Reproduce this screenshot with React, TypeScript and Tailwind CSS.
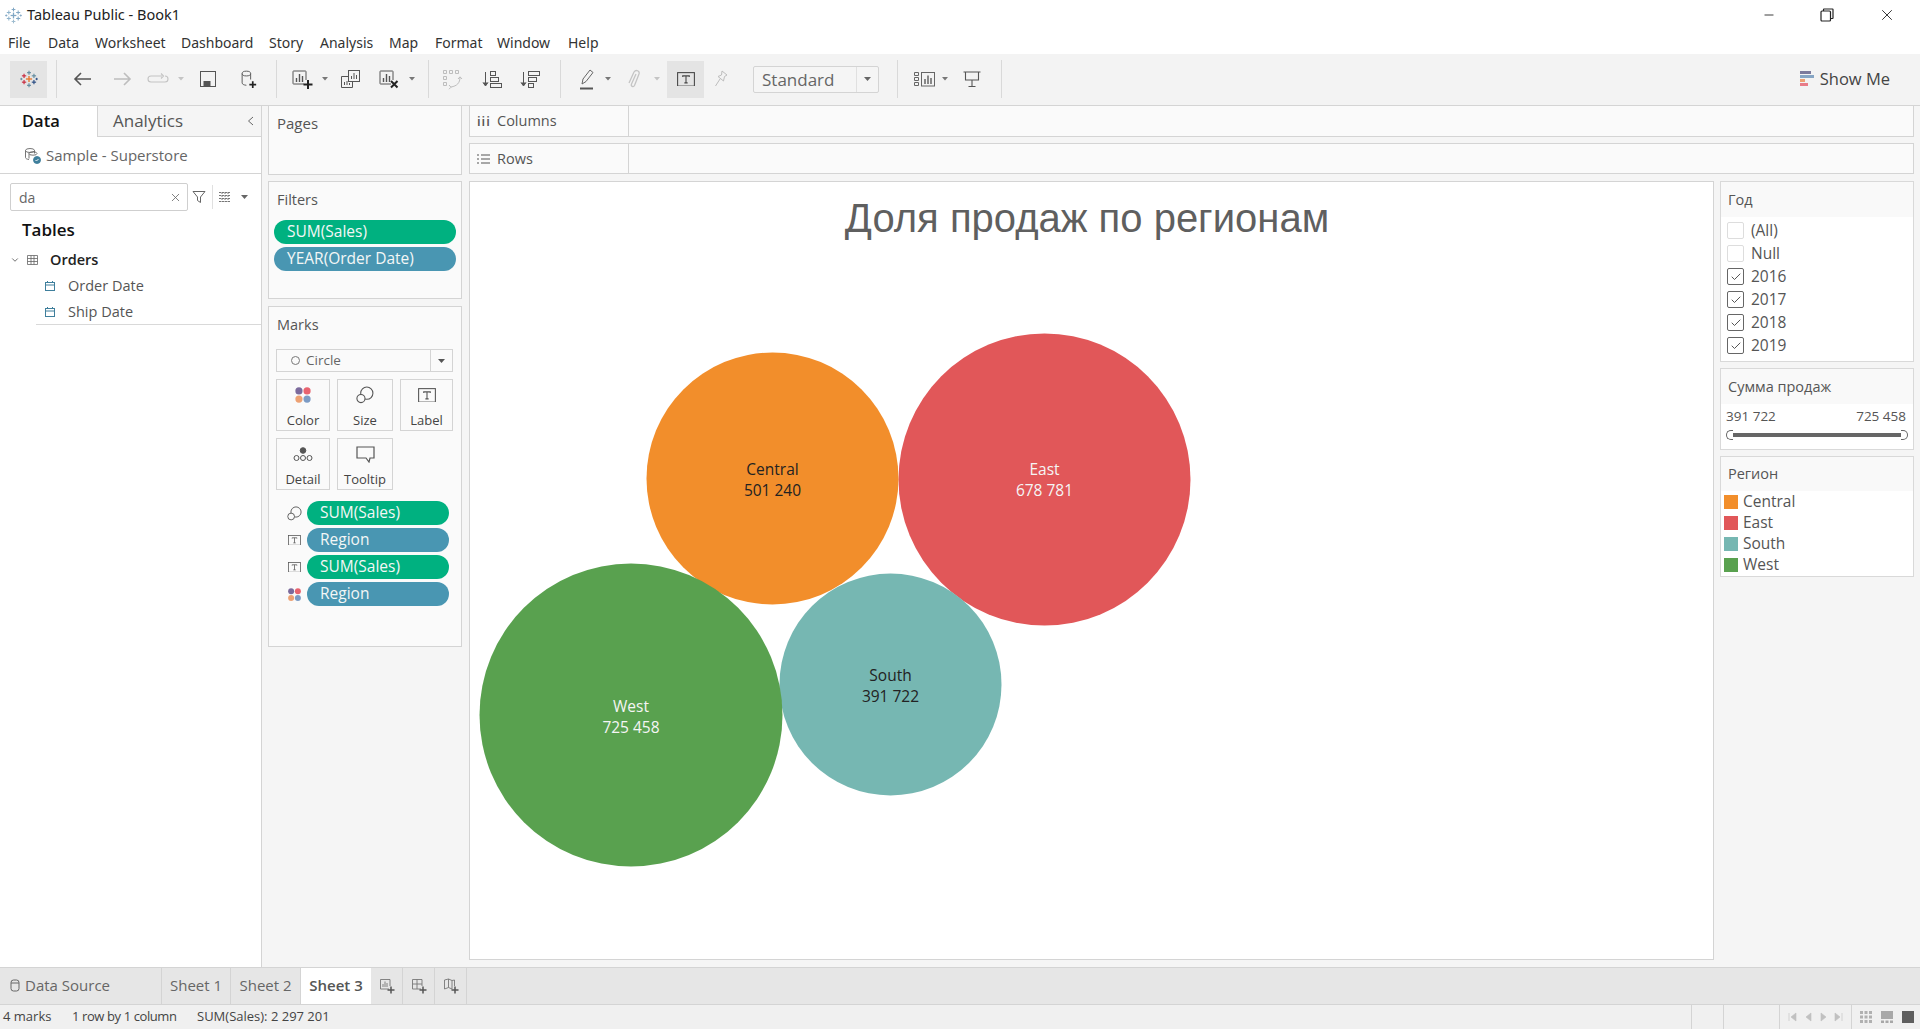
import type { ReactNode } from "react"
import { X, Minus, ChevronDown, Check } from "lucide-react"

const menus = [
  { label: "File", w: "w-[40px]" },
  { label: "Data", w: "w-[47px]" },
  { label: "Worksheet", w: "w-[86px]" },
  { label: "Dashboard", w: "w-[88px]" },
  { label: "Story", w: "w-[51px]" },
  { label: "Analysis", w: "w-[69px]" },
  { label: "Map", w: "w-[46px]" },
  { label: "Format", w: "w-[62px]" },
  { label: "Window", w: "w-[71px]" },
  { label: "Help", w: "w-[40px]" },
]

const years = [
  { label: "(All)", on: false },
  { label: "Null", on: false },
  { label: "2016", on: true },
  { label: "2017", on: true },
  { label: "2018", on: true },
  { label: "2019", on: true },
]

const regions = [
  { label: "Central", color: "bg-[#f28e2b]" },
  { label: "East", color: "bg-[#e15759]" },
  { label: "South", color: "bg-[#76b7b2]" },
  { label: "West", color: "bg-[#59a14f]" },
]

const marks = [
  { cx: 1044.5, cy: 479.5, r: 146, ly: 474.5, fill: "#e15759", name: "East", value: "678 781", text: "#f5f5f5" },
  { cx: 772.5, cy: 478.5, r: 126, ly: 474.5, fill: "#f28e2b", name: "Central", value: "501 240", text: "#222222" },
  { cx: 890.5, cy: 684.5, r: 111, ly: 680.5, fill: "#76b7b2", name: "South", value: "391 722", text: "#222222" },
  { cx: 631, cy: 715, r: 151.5, ly: 711.5, fill: "#59a14f", name: "West", value: "725 458", text: "#f5f5f5" },
]

function Logo({ size = 18, pale = false }: { size?: number; pale?: boolean }) {
  const c = pale
    ? ["#7fa6c4", "#7fa6c4", "#8fb3cc", "#7fa6c4", "#9dbccf"]
    : ["#e8762b", "#5b879b", "#c72035", "#1f447e", "#59879b"]
  const plus = (x: number, y: number, s: number, col: string, w = 1.2) => (
    <g stroke={col} strokeWidth={w}>
      <line x1={x - s} y1={y} x2={x + s} y2={y} />
      <line x1={x} y1={y - s} x2={x} y2={y + s} />
    </g>
  )
  return (
    <svg width={size} height={size} viewBox="0 0 20 20">
      {plus(10, 10, 3.4, c[0], 1.5)}
      {plus(10, 3, 2.2, c[1])}
      {plus(10, 17, 2.2, c[4])}
      {plus(4.5, 6.5, 2.4, c[2])}
      {plus(15.5, 6.5, 2.4, c[1])}
      {plus(4.5, 13.5, 2.4, c[2])}
      {plus(15.5, 13.5, 2.4, c[3])}
      {plus(1.5, 10, 1.3, c[1], 1)}
      {plus(18.5, 10, 1.3, c[3], 1)}
    </svg>
  )
}

function Sep({ ml }: { ml: string }) {
  return <div className={`${ml} h-[38px] w-px bg-[#d9d9d9]`} />
}

function Slot({ ml, children }: { ml: string; children: ReactNode }) {
  return <div className={`${ml} flex h-6 w-6 items-center justify-center`}>{children}</div>
}

function Caret({ ml, pale = false }: { ml: string; pale?: boolean }) {
  return (
    <div className={`${ml} flex w-2 justify-center`}>
      <svg width="6" height="4" viewBox="0 0 6 4">
        <path d="M0 0h6L3 3.5z" fill={pale ? "#c4c4c4" : "#777777"} />
      </svg>
    </div>
  )
}

function ChartBox({ plus, cross }: { plus?: boolean; cross?: boolean }) {
  return (
    <svg width="24" height="24" viewBox="0 0 24 24" fill="none">
      <path d="M15 17H4.5a.5.5 0 0 1-.5-.5V4.500a.5.5 0 0 1 .5-.5h12a.5.5 0 0 1 .5.500V13" stroke="#555555" />
      <path d="M7.500 15v-4M10.500 15V7M13.500 15v-6" stroke="#555555" strokeWidth="1.400" />
      {plus && <path d="M19 13v9M14.500 17.500h9" stroke="#222222" strokeWidth="2" />}
      {cross && <path d="M15 14l6.500 6.500M21.500 14L15 20.500" stroke="#222222" strokeWidth="2" />}
    </svg>
  )
}

function TBox({ size = 17, color = "#555555" }: { size?: number; color?: string }) {
  return (
    <svg width={size} height={size * 0.82} viewBox="0 0 22 18" fill="none">
      <rect x="0.750" y="0.750" width="20.500" height="16.500" stroke={color} strokeWidth="1.300" />
      <path d="M7 6V4.700h8V6M11 4.700v8.600M9 13.300h4" stroke={color} strokeWidth="1.300" />
    </svg>
  )
}

function Dots({ size = 20 }: { size?: number }) {
  return (
    <svg width={size} height={size} viewBox="0 0 20 20">
      <circle cx="5.500" cy="5.500" r="4" fill="#7b6a9c" />
      <circle cx="14.500" cy="5.500" r="4" fill="#e8636f" />
      <circle cx="5.500" cy="14.500" r="4" fill="#eda173" />
      <circle cx="14.500" cy="14.500" r="4" fill="#7c9bc4" />
    </svg>
  )
}

function SizeIcon({ size = 20 }: { size?: number }) {
  return (
    <svg width={size} height={size} viewBox="0 0 20 20" fill="none" stroke="#555555" strokeWidth="1.200">
      <circle cx="12" cy="8" r="6.800" />
      <circle cx="5.500" cy="14" r="4.500" fill="#fafafa" />
    </svg>
  )
}

function Calendar() {
  return (
    <svg width="12" height="12" viewBox="0 0 12 12" fill="none" stroke="#3f7f9c">
      <rect x="1.500" y="2.500" width="9" height="8" />
      <path d="M1.500 5h9M3.500 1v2M8.500 1v2" />
    </svg>
  )
}

function Pill({ label, green, wide }: { label: string; green?: boolean; wide?: boolean }) {
  return (
    <div
      className={`flex h-6 items-center rounded-full text-[15.500px] text-[#f4f7f6] ${
        green ? "bg-[#00b180]" : "bg-[#4996b2]"
      } ${wide ? "w-[182px] pl-[13px]" : "w-[142px] pl-[13px]"}`}
    >
      {label}
    </div>
  )
}

function ShelfRow({ label, icon, className }: { label: string; icon: ReactNode; className: string }) {
  return (
    <div className={`flex h-[31px] border border-[#d4d4d4] bg-[#fafafa] ${className}`}>
      <div className="flex w-[159px] items-center gap-[7px] border-r border-[#d4d4d4] pl-[7px] text-[14.500px] text-[#555555]">
        {icon}
        {label}
      </div>
    </div>
  )
}

function MarkCard({ label, icon }: { label: string; icon: ReactNode }) {
  return (
    <div className="flex h-[52px] flex-col items-center border border-[#d4d4d4] pt-[4px] text-[13px] leading-none text-[#444444]">
      <div className="flex h-[22px] items-center">{icon}</div>
      <div className="mt-[8px]">{label}</div>
    </div>
  )
}

function CardHeader({ label, h }: { label: string; h: string }) {
  return <div className={`${h} flex items-center bg-[#f9f9f9] pl-[7px] text-[14.500px] text-[#555555]`}>{label}</div>
}

export default function App() {
  return (
    <div className="flex h-[1029px] w-[1920px] flex-col overflow-hidden bg-[#f5f5f5] font-['Open_Sans',sans-serif]">
      {/* title bar */}
      <div className="flex h-[30px] items-center bg-white pl-[5px] text-[15px] text-[#222222]">
        <Logo size={17} pale />
        <span className="ml-[5px] font-['Noto_Sans',sans-serif] text-[14.500px]">Tableau Public - Book1</span>
        <div className="ml-auto flex items-center">
          <Minus className="h-[14px] w-[14px] text-[#222222]" strokeWidth={1.500} />
          <svg className="ml-[44px]" width="14" height="14" viewBox="0 0 14 14" fill="none" stroke="#222222" strokeWidth="1.200">
            <rect x="1" y="3" width="9.500" height="10" rx="1" />
            <path d="M3.500 3V1.500a.5.5 0 0 1 .5-.5h8.500a.5.5 0 0 1 .5.500V10a.5.5 0 0 1-.5.500H10.500" />
          </svg>
          <X className="ml-[44px] mr-[24px] h-[18px] w-[18px] text-[#222222]" strokeWidth={1.200} />
        </div>
      </div>

      {/* menu */}
      <div className="flex h-6 items-center bg-white pl-2 font-['Noto_Sans',sans-serif] text-[14px] text-[#333333]">
        {menus.map((m) => (
          <span key={m.label} className={m.w}>
            {m.label}
          </span>
        ))}
      </div>

      {/* toolbar */}
      <div className="flex h-[52px] items-center border-b border-[#d4d4d4] bg-[#f3f3f3] pb-[1px] pl-[10px]">
        <div className="flex h-[37px] w-[37px] items-center justify-center bg-[#e4e4e4]">
          <Logo size={18} />
        </div>
        <Sep ml="ml-[9px]" />
        <Slot ml="ml-[14px]">
          <svg width="20" height="16" viewBox="0 0 20 16" fill="none" stroke="#555555" strokeWidth="1.600">
            <path d="M18 8H2M8 2L2 8l6 6" />
          </svg>
        </Slot>
        <Slot ml="ml-[15px]">
          <svg width="20" height="16" viewBox="0 0 20 16" fill="none" stroke="#bdbdbd" strokeWidth="1.600">
            <path d="M2 8h16M12 2l6 6-6 6" />
          </svg>
        </Slot>
        <Slot ml="ml-[12px]">
          <svg width="22" height="14" viewBox="0 0 22 14" fill="none" stroke="#c4c4c4" strokeWidth="1.100">
            <path d="M15 4H4a3 3 0 0 0 0 6h14a3 3 0 0 0 0-6M14 1.500L16.500 4 14 6.500" />
          </svg>
        </Slot>
        <Caret ml="ml-[7px]" pale />
        <Slot ml="ml-[11px]">
          <svg width="18" height="18" viewBox="0 0 18 18" fill="none" stroke="#555555">
            <rect x="1.500" y="1.500" width="15" height="15" />
            <rect x="5" y="11.500" width="6" height="5" fill="#555555" />
          </svg>
        </Slot>
        <Slot ml="ml-[16px]">
          <svg width="17" height="19" viewBox="0 0 20 22" fill="none" stroke="#555555" strokeWidth="1.100">
            <ellipse cx="7.500" cy="4" rx="5" ry="2.800" />
            <path d="M2.500 4v11c0 1.500 2 2.500 5 2.800M12.500 4v7" />
            <path d="M15 13v8M11 17h8" stroke="#222222" strokeWidth="2" />
          </svg>
        </Slot>
        <Sep ml="ml-[16px]" />
        <Slot ml="ml-[12px]">
          <ChartBox plus />
        </Slot>
        <Caret ml="ml-[8px]" />
        <Slot ml="ml-[9px]">
          <svg width="22" height="22" viewBox="0 0 22 22" fill="none" stroke="#555555">
            <rect x="9.500" y="2.500" width="11" height="11" fill="#f3f3f3" />
            <path d="M12.500 11V8M15 11V5M17.500 11V7" />
            <path d="M9.500 8.500H2.500v11h11v-6" />
            <path d="M5.500 17v-3M8 17v-4M10.500 17v-2" />
          </svg>
        </Slot>
        <Slot ml="ml-[14px]">
          <ChartBox cross />
        </Slot>
        <Caret ml="ml-[8px]" />
        <Sep ml="ml-[12px]" />
        <Slot ml="ml-[11px]">
          <svg width="22" height="22" viewBox="0 0 22 22" fill="none" stroke="#bdbdbd">
            <path d="M2.500 2.500h3v3h-3zM8.500 2.500h3v3h-3zM14.500 2.500h3v3h-3zM2.500 8.500h3v3h-3zM2.500 14.500h3v3h-3z" />
            <path d="M19 9c0 6-3 9-9 10M8 17l2 2.200-2 2M17 11l2-2.200 2 2.200" />
          </svg>
        </Slot>
        <Slot ml="ml-[16px]">
          <svg width="20" height="20" viewBox="0 0 20 20" fill="none" stroke="#555555">
            <path d="M3.500 3v13M1 13.500l2.500 3.500 2.500-3.500" fill="#555555" />
            <rect x="8.500" y="2.500" width="5" height="4" />
            <rect x="8.500" y="8.500" width="8" height="4" />
            <rect x="8.500" y="14.500" width="11" height="4" />
          </svg>
        </Slot>
        <Slot ml="ml-[14px]">
          <svg width="20" height="20" viewBox="0 0 20 20" fill="none" stroke="#555555">
            <path d="M3.500 3v13M1 13.500l2.500 3.500 2.500-3.500" fill="#555555" />
            <rect x="8.500" y="2.500" width="11" height="4" />
            <rect x="8.500" y="8.500" width="8" height="4" />
            <rect x="8.500" y="14.500" width="5" height="4" />
          </svg>
        </Slot>
        <Sep ml="ml-[18px]" />
        <Slot ml="ml-[14px]">
          <svg width="18" height="24" viewBox="0 0 18 24" fill="none" stroke="#666666">
            <path d="M4 17l1-5 7-9 3 2.500-7 9z" />
            <path d="M2 21.500h13" strokeWidth="2" stroke="#555555" />
          </svg>
        </Slot>
        <Caret ml="ml-[5px]" />
        <Slot ml="ml-[10px]">
          <svg width="14" height="22" viewBox="0 0 14 22" fill="none" stroke="#c4c4c4" strokeWidth="1.300">
            <path d="M9 6l-4.500 10c-1 2.500 2 3.500 3 1.500L12 6c1-3-3-5-5-2L2 15" />
          </svg>
        </Slot>
        <Caret ml="ml-[7px]" pale />
        <div className="ml-[6px] flex h-[37px] w-[37px] items-center justify-center bg-[#e4e4e4]">
          <TBox size={18} color="#444444" />
        </div>
        <Slot ml="ml-[5px]">
          <svg width="14" height="18" viewBox="0 0 14 18" fill="none" stroke="#bdbdbd">
            <path d="M8 1l5 4-2.500 1.500-1 4.500-5.500-4.500 3.500-1.500zM6 9l-4.500 7" />
          </svg>
        </Slot>
        <div className="ml-5 flex h-[27px] w-[126px] items-center rounded-[2px] border border-[#d4d4d4] bg-[#f5f5f5] text-[17px] text-[#666666]">
          <span className="w-[103px] border-r border-[#e0e0e0] pl-[8px] leading-[25px]">Standard</span>
          <div className="flex flex-1 justify-center">
            <svg width="7" height="4" viewBox="0 0 7 4">
              <path d="M0 0h7L3.500 4z" fill="#666666" />
            </svg>
          </div>
        </div>
        <Sep ml="ml-[18px]" />
        <Slot ml="ml-[14px]">
          <svg width="21" height="15" viewBox="0 0 21 15" fill="none" stroke="#666666">
            <path d="M.5.500h4v3h-4zM.5 5.500h4v3h-4zM.5 10.500h4v3h-4z" />
            <rect x="7.500" y="0.500" width="13" height="13.500" />
            <path d="M11 12V7M14 12V3.500M17 12V6" strokeWidth="1.500" />
          </svg>
        </Slot>
        <Caret ml="ml-[5px]" />
        <Slot ml="ml-[11px]">
          <svg width="18" height="16" viewBox="0 0 18 16" fill="none" stroke="#555555" strokeWidth="1.100">
            <path d="M.5 1h17M2.500 1v8h13V1M9 9v6M5.500 15.500h7" />
          </svg>
        </Slot>
        <Sep ml="ml-[17px]" />
        <div className="ml-auto mr-[30px] flex items-center gap-[6px] text-[16.500px] text-[#444444]">
          <svg width="14" height="16" viewBox="0 0 14 16">
            <rect x="0" y="0" width="11" height="3" fill="#7b7a9c" />
            <rect x="0" y="4" width="14" height="3" fill="#86a5c4" />
            <rect x="0" y="8" width="5" height="3" fill="#eda173" />
            <rect x="0" y="12" width="8" height="3" fill="#e87c88" />
          </svg>
          Show Me
        </div>
      </div>

      {/* workspace */}
      <div className="flex min-h-0 flex-1">
        {/* data pane */}
        <div className="flex w-[262px] flex-col border-r border-[#d4d4d4] bg-white text-[#444444]">
          <div className="flex h-[31px] items-center">
            <div className="flex h-full w-[97px] items-center pl-[22px] text-[16.500px] font-semibold text-[#111111]">Data</div>
            <div className="flex h-full flex-1 items-center border-b border-l border-[#d4d4d4] bg-[#f5f5f5] pl-[15px] text-[17px] text-[#555555]">
              Analytics
              <svg className="ml-auto mr-[7px]" width="7" height="10" viewBox="0 0 7 10" fill="none" stroke="#666666">
                <path d="M6 1L1.500 5 6 9" />
              </svg>
            </div>
          </div>
          <div className="flex h-[37px] items-center border-b border-[#d4d4d4] pl-6 text-[15px] text-[#666666]">
            <svg width="17" height="17" viewBox="0 0 17 17" fill="none" stroke="#666666" strokeWidth="0.900">
              <ellipse cx="6" cy="3.500" rx="4.500" ry="2" />
              <path d="M1.500 3.500v7c0 1 1.500 1.800 3.500 2M10.500 3.500v3" />
              <ellipse cx="9" cy="6.500" rx="4" ry="1.700" />
              <path d="M5 6.500v5" />
              <circle cx="13" cy="13" r="3.500" fill="#3f7f9c" stroke="#3f7f9c" />
              <path d="M11.500 13l1 1 2-2" stroke="#ffffff" />
            </svg>
            <span className="ml-[5px]">Sample - Superstore</span>
          </div>
          <div className="mt-[9px] flex items-center pl-[10px]">
            <div className="flex h-[28px] w-[178px] items-center rounded-[2px] border border-[#cfcfcf] pl-2 text-[14px] text-[#666666]">
              da
              <X className="ml-auto mr-[5px] h-[13px] w-[13px] text-[#666666]" strokeWidth={1.500} />
            </div>
            <svg className="ml-[4px]" width="14" height="14" viewBox="0 0 14 14" fill="none" stroke="#666666">
              <path d="M1 1.500h12L8.500 7v5.500l-3-2V7z" />
            </svg>
            <div className="ml-[6px] h-[24px] w-px bg-[#e0e0e0]" />
            <svg className="ml-[6px]" width="12" height="10" viewBox="0 0 12 10" fill="none" stroke="#777777">
              <path d="M0 .5h12M0 3.500h12M0 6.500h12M0 9.500h12M3 0v10M6 0v10M9 0v10" strokeDasharray="2 1" />
            </svg>
            <svg className="ml-[10px]" width="7" height="4" viewBox="0 0 7 4">
              <path d="M0 0h7L3.500 4z" fill="#666666" />
            </svg>
          </div>
          <div className="mt-[7px] pl-[22px] text-[17px] font-semibold leading-[24px] text-[#111111]">Tables</div>
          <div className="mt-[5px] flex h-[26px] items-center pl-[10px] text-[14.500px] font-semibold text-[#222222]">
            <ChevronDown className="h-[10px] w-[10px] text-[#555555]" strokeWidth={2} />
            <svg className="ml-[7px]" width="11" height="10" viewBox="0 0 11 10" fill="none" stroke="#666666" strokeWidth="0.800">
              <path d="M.5.500h10v9H.5zM.5 3.500h10M.5 6.500h10M4 .5v9M7 .5v9" />
            </svg>
            <span className="ml-[12px]">Orders</span>
          </div>
          <div className="flex h-[26px] items-center pl-[44px] text-[14.500px] text-[#555555]">
            <Calendar />
            <span className="ml-[12px]">Order Date</span>
          </div>
          <div className="ml-[36px] flex h-[26px] items-center border-b border-[#d9d9d9] pl-2 text-[14.500px] text-[#555555]">
            <Calendar />
            <span className="ml-[12px]">Ship Date</span>
          </div>
        </div>

        {/* cards column */}
        <div className="ml-[6px] flex w-[194px] flex-col text-[#555555]">
          <div className="h-[69px] border-x border-b border-[#d4d4d4] bg-[#fafafa] pl-2 pt-[6px] text-[15px]">Pages</div>
          <div className="mt-[6px] h-[118px] border border-[#d4d4d4] bg-[#fafafa] pl-[5px]">
            <div className="pl-[3px] pt-[8px] text-[14.500px] leading-[20px]">Filters</div>
            <div className="mt-[10px] flex flex-col gap-[3px]">
              <Pill label="SUM(Sales)" green wide />
              <Pill label="YEAR(Order Date)" wide />
            </div>
          </div>
          <div className="mt-[7px] h-[341px] border border-[#d4d4d4] bg-[#fafafa] px-[7px]">
            <div className="pl-px pt-[8px] text-[14.500px] leading-[20px]">Marks</div>
            <div className="mt-[14px] flex h-[23px] w-[177px] items-center border border-[#d4d4d4] pl-[14px] text-[13.500px] text-[#666666]">
              <div className="h-[9px] w-[9px] rounded-full border border-[#777777]" />
              <span className="ml-[6px]">Circle</span>
              <div className="ml-auto flex h-full w-[22px] items-center justify-center border-l border-[#d4d4d4]">
                <svg width="7" height="4" viewBox="0 0 7 4">
                  <path d="M0 0h7L3.500 4z" fill="#555555" />
                </svg>
              </div>
            </div>
            <div className="mt-[7px] grid w-[177px] grid-cols-[54px_56px_53px] gap-x-[7px] gap-y-[7px]">
              <MarkCard label="Color" icon={<Dots size={18} />} />
              <MarkCard label="Size" icon={<SizeIcon size={18} />} />
              <MarkCard label="Label" icon={<TBox size={18} />} />
              <MarkCard
                label="Detail"
                icon={
                  <svg width="20" height="15" viewBox="0 0 20 15" fill="none" stroke="#555555">
                    <circle cx="10" cy="3.500" r="2.800" fill="#555555" />
                    <circle cx="3.500" cy="11" r="2.500" />
                    <circle cx="10" cy="11" r="2.500" />
                    <circle cx="16.500" cy="11" r="2.500" />
                  </svg>
                }
              />
              <MarkCard
                label="Tooltip"
                icon={
                  <svg width="19" height="17" viewBox="0 0 19 17" fill="none" stroke="#555555" strokeWidth="1.200">
                    <path d="M1 1h17v11h-4l-1 4-3-4H1z" />
                  </svg>
                }
              />
            </div>
            <div className="mt-[11px] flex flex-col gap-[3px]">
              {[
                { label: "SUM(Sales)", green: true, icon: <SizeIcon size={15} /> },
                { label: "Region", green: false, icon: <TBox size={13} /> },
                { label: "SUM(Sales)", green: true, icon: <TBox size={13} /> },
                { label: "Region", green: false, icon: <Dots size={15} /> },
              ].map((row, i) => (
                <div key={i} className="flex items-center">
                  <div className="flex w-[31px] justify-center pl-[6px]">{row.icon}</div>
                  <Pill label={row.label} green={row.green} />
                </div>
              ))}
            </div>
          </div>
        </div>

        {/* shelves and view */}
        <div className="ml-[7px] flex min-w-0 flex-1 flex-col pb-[7px] pr-[6px]">
          <ShelfRow className="border-t-0" label="Columns" icon={<span className="w-[13px] text-[13px] font-semibold leading-none tracking-[1px]">iii</span>} />
          <ShelfRow
            className="mt-[6px]"
            label="Rows"
            icon={
              <svg width="13" height="10" viewBox="0 0 13 10" stroke="#555555">
                <path d="M0 1h2M4 1h9M0 5h2M4 5h9M0 9h2M4 9h9" />
              </svg>
            }
          />
          <div className="mt-[7px] flex min-h-0 flex-1 gap-[6px]">
            <div className="relative w-[1245px] border border-[#d4d4d4] bg-white">
              <div className="pr-[9px] pt-[13px] text-center font-['Liberation_Sans',sans-serif] text-[40px] leading-[46px] text-[#5f5f5f]">
                Доля продаж по регионам
              </div>
              <svg className="absolute inset-0" width="1243" height="777" viewBox="470 182 1243 777">
                {marks.map((m) => (
                  <circle key={m.name} cx={m.cx} cy={m.cy} r={m.r} fill={m.fill} />
                ))}
                {marks.map((m) => (
                  <text key={m.name} x={m.cx} y={m.ly} textAnchor="middle" fontSize="15.5" fill={m.text}>
                    <tspan x={m.cx}>{m.name}</tspan>
                    <tspan x={m.cx} dy="21">
                      {m.value}
                    </tspan>
                  </text>
                ))}
              </svg>
            </div>

            <div className="flex flex-1 flex-col gap-[6px] text-[#555555]">
              <div className="h-[181px] border border-[#d9d9d9] bg-white">
                <CardHeader label="Год" h="h-[35px]" />
                <div className="pt-[2px]">
                  {years.map((y) => (
                    <div key={y.label} className="flex h-[23px] items-center pl-[6px] text-[15.500px]">
                      <div
                        className={`flex h-[17px] w-[17px] items-center justify-center rounded-[2px] border ${
                          y.on ? "border-[#666666]" : "border-[#dddddd]"
                        }`}
                      >
                        {y.on && <Check className="h-3 w-3 text-[#555555]" strokeWidth={2} />}
                      </div>
                      <span className="ml-[7px]">{y.label}</span>
                    </div>
                  ))}
                </div>
              </div>
              <div className="h-[82px] border border-[#d9d9d9] bg-white">
                <CardHeader label="Сумма продаж" h="h-[35px]" />
                <div className="flex justify-between px-[5px] pt-[3px] text-[13.500px] leading-[18px]">
                  <span>391 722</span>
                  <span className="pr-[2px]">725 458</span>
                </div>
                <div className="ml-[5px] mt-[5px] flex w-[182px] items-center">
                  <div className="h-[10px] w-[7px] rounded-l-full border border-r-0 border-[#666666] bg-white" />
                  <div className="h-[4px] flex-1 bg-[#666666]" />
                  <div className="h-[10px] w-[7px] rounded-r-full border border-l-0 border-[#666666] bg-white" />
                </div>
              </div>
              <div className="h-[121px] border border-[#d9d9d9] bg-white">
                <CardHeader label="Регион" h="h-[34px]" />
                {regions.map((r) => (
                  <div key={r.label} className="flex h-[21px] items-center pl-[3px] text-[15.500px]">
                    <div className={`h-[14px] w-[14px] ${r.color}`} />
                    <span className="ml-[5px]">{r.label}</span>
                  </div>
                ))}
              </div>
            </div>
          </div>
        </div>
      </div>

      {/* sheet tabs */}
      <div className="flex h-[37px] border-t border-[#d4d4d4] bg-[#e6e6e6] text-[15px] text-[#666666]">
        <div className="flex w-[162px] items-center border-r border-[#d4d4d4] pb-[2px] pl-[10px]">
          <svg width="10" height="13" viewBox="0 0 10 13" fill="none" stroke="#666666">
            <rect x="1" y="1" width="8" height="11" rx="2.500" />
            <path d="M1 4h8" />
          </svg>
          <span className="ml-[5px]">Data Source</span>
        </div>
        <div className="flex w-[69px] items-center justify-center border-r border-[#d4d4d4] pb-[2px]">Sheet 1</div>
        <div className="flex w-[70px] items-center justify-center border-r border-[#d4d4d4] pb-[2px]">Sheet 2</div>
        <div className="flex w-[70px] items-center justify-center bg-white pb-[2px] font-semibold text-[#555555]">Sheet 3</div>
        <div className="flex w-[32px] items-center justify-center border-r border-[#d4d4d4]">
          <ChartTabIcon kind="sheet" />
        </div>
        <div className="flex w-[32px] items-center justify-center border-r border-[#d4d4d4]">
          <ChartTabIcon kind="dash" />
        </div>
        <div className="flex w-[32px] items-center justify-center border-r border-[#d4d4d4]">
          <ChartTabIcon kind="story" />
        </div>
      </div>

      {/* status bar */}
      <div className="flex h-[25px] items-center border-t border-[#d4d4d4] bg-[#f0f0f0] text-[13px] text-[#444444]">
        <span className="ml-[3px] w-[69px]">4 marks</span>
        <span className="w-[125px] tracking-[-0.4px]">1 row by 1 column</span>
        <span>SUM(Sales): 2 297 201</span>
        <div className="ml-auto flex h-full">
          <div className="w-[32px] border-l border-[#d4d4d4]" />
          <div className="w-[56px] border-l border-[#d4d4d4]" />
          <div className="flex w-[72px] items-center justify-around border-l border-[#d4d4d4] px-[4px]">
            <NavIcon d="M2 1v8M9 1L4 5l5 4z" />
            <NavIcon d="M8 1L3 5l5 4z" />
            <NavIcon d="M3 1l5 4-5 4z" />
            <NavIcon d="M8 1v8M1 1l5 4-5 4z" />
          </div>
          <div className="flex w-[69px] items-center gap-[9px] border-l border-[#d4d4d4] pl-[8px]">
            <svg width="12" height="12" viewBox="0 0 12 12" fill="#b0b0b0">
              <path d="M0 0h3v3H0zM4.500 0h3v3h-3zM9 0h3v3H9zM0 4.500h3v3H0zM4.500 4.500h3v3h-3zM9 4.500h3v3H9zM0 9h3v3H0zM4.500 9h3v3h-3zM9 9h3v3H9z" />
            </svg>
            <svg width="12" height="12" viewBox="0 0 12 12" fill="#a8a8a8">
              <path d="M0 0h12v8H0zM0 9.500h3V12H0zM4.500 9.500h3V12h-3zM9 9.500h3V12H9z" />
            </svg>
            <div className="h-[12px] w-[12px] bg-[#5f5f5f]" />
          </div>
        </div>
      </div>
    </div>
  )
}

function NavIcon({ d }: { d: string }) {
  return (
    <svg width="10" height="10" viewBox="0 0 10 10" fill="#c0c0c0" stroke="#c0c0c0" strokeWidth="0.600">
      <path d={d} />
    </svg>
  )
}

function ChartTabIcon({ kind }: { kind: "sheet" | "dash" | "story" }) {
  return (
    <svg width="16" height="16" viewBox="0 0 16 16" fill="none" stroke="#777777" strokeWidth="0.900">
      {kind === "sheet" && <path d="M10 11H1.500V1.500h9.500V8M4 9V6M6 9V3.500M8 9V5" />}
      {kind === "dash" && <path d="M10 11H1.500V1.500h9.500V8M1.500 6h9.500M6 1.500V11" />}
      {kind === "story" && <path d="M9 11L5.500 9.500 1.500 11V2l4-1 3.500 1.500L11.500 2v6M5.500 1v8.500M9 2.500V11" />}
      <path d="M12 8.500v7M8.500 12h7" stroke="#555555" strokeWidth="1.500" />
    </svg>
  )
}
